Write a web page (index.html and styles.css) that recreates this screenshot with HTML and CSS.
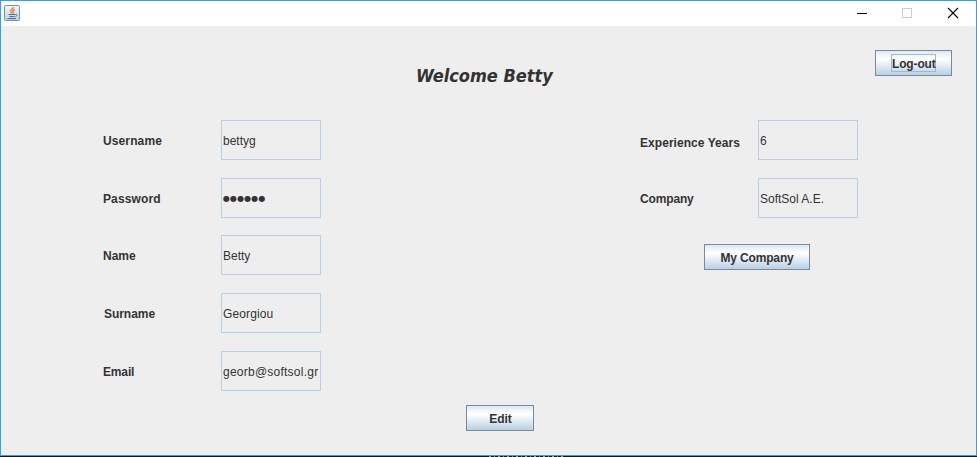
FILE: index.html
```
<!DOCTYPE html>
<html lang="en">
<head>
<meta charset="utf-8">
<title>Profile</title>
<link rel="stylesheet" href="styles.css">
</head>
<body>
<div class="window">
  <header class="titlebar">
    <svg class="app-icon" width="16" height="16" viewBox="0 0 16 16">
      <defs><linearGradient id="g" x1="0" y1="0" x2="0" y2="1"><stop offset="0" stop-color="#f4f7f9"/><stop offset="1" stop-color="#c3d0db"/></linearGradient></defs>
      <rect x=".5" y=".5" width="15" height="15" rx="1" fill="url(#g)" stroke="#7790a4"/>
      <path d="M9.300 2c.7 1.800-3.300 2.400-2.600 4.400.3.800 1 1.200 1.300 1.800M11 4.300c-1.500.7-2.700 1.300-1.900 2.300.5.600.2 1.100-.3 1.600" fill="none" stroke="#ea7a21" stroke-width="1.300"/>
      <path d="M4.500 9.500h6.500M5.500 11.500h5M3.500 13.500h8.500M11.200 9.500c2.500-.6 2.200 1.500.3 2" fill="none" stroke="#416e9c"/>
    </svg>
    <svg class="controls" width="102" height="12" viewBox="0 0 102 12" shape-rendering="crispEdges">
      <path d="M0 6.500h10" stroke="#000"/>
      <rect x="45.500" y="1.500" width="9" height="9" fill="none" stroke="#ccc"/>
      <path d="M91 1l10 10M101 1l-10 10" stroke="#000" stroke-width="1.100" shape-rendering="auto"/>
    </svg>
  </header>
  <main class="content">
    <div class="top">
      <h1>Welcome Betty</h1>
      <button class="btn logout"><span>Log-out</span></button>
    </div>
    <div class="columns">
      <section class="fields">
        <div class="row"><label class="wide">Username</label><div class="field">bettyg</div></div>
        <div class="row tight"><label class="wide">Password</label><div class="field dots">●●●●●●</div></div>
        <div class="row"><label>Name</label><div class="field">Betty</div></div>
        <div class="row"><label class="nudge">Surname</label><div class="field georg">Georgiou</div></div>
        <div class="row"><label class="narrow">Email</label><div class="field email">georb@softsol.gr</div></div>
      </section>
      <section class="fields">
        <div class="row"><label class="exp">Experience Years</label><div class="field">6</div></div>
        <div class="row"><label class="narrow">Company</label><div class="field">SoftSol A.E.</div></div>
        <button class="btn company">My Company</button>
      </section>
    </div>
    <button class="btn edit">Edit</button>
  </main>
</div>
<div class="backdrop"><div class="speckle"></div></div>
</body>
</html>
```
FILE: styles.css
```
* { box-sizing: border-box; }
body {
  margin: 0;
  height: 457px;
  overflow: hidden;
  font: 12px/14px "Liberation Sans", Arial, sans-serif;
  color: #333;
}
.window {
  height: 456px;
  border: 1px solid #35a0e8;
  background: #eee;
}
.backdrop { height: 1px; padding-left: 489px; background: #02192f; }
.speckle {
  width: 77px;
  height: 1px;
  background: repeating-linear-gradient(90deg, #a89c94 0 2px, #02192f 2px 5px, #6f86a4 5px 6px, #02192f 6px 9px);
}
.titlebar {
  height: 25px;
  display: flex;
  justify-content: space-between;
  padding: 4px 17px 0 3px;
  background: #fff;
}
.controls { margin-top: 2px; }
.content { display: flex; flex-direction: column; }
.top {
  display: flex;
  justify-content: space-between;
  align-items: flex-start;
  padding: 24px 24px 0 415px;
  height: 94px;
}
h1 {
  margin: 14px 0 0;
  font: italic bold 18px/24px "DejaVu Sans Condensed", "DejaVu Sans", sans-serif;
  font-stretch: condensed;
  white-space: nowrap;
}
.btn {
  height: 26px;
  padding: 2px 0 0;
  border: 1px solid #7a8a99;
  background: linear-gradient(#dde8f3 0, #fff 32%, #fff 35%, #b8cfe5 100%);
  font: bold 12px/14px "Liberation Sans", Arial, sans-serif;
  color: #333;
  white-space: nowrap;
}
.logout { width: 77px; display: flex; justify-content: center; align-items: flex-start; padding-top: 3px; }
.logout span { width: 45px; height: 18px; padding-top: 2px; border: 1px solid #a3b8cc; letter-spacing: -.15px; }
.columns { display: grid; grid-template-columns: 218px 1fr; column-gap: 319px; padding-left: 102px; }
.row { display: grid; grid-template-columns: 118px 100px; align-items: center; height: 40px; margin-bottom: 18px; }
.tight { margin-bottom: 17px; }
label { font-weight: bold; padding-top: 2px; white-space: nowrap; }
.wide { letter-spacing: .12px; }
.narrow { letter-spacing: -.15px; }
.nudge { padding-left: 1px; letter-spacing: -.05px; }
.exp { padding-top: 6px; letter-spacing: .05px; }
.field { height: 40px; padding: 13px 0 0 1px; border: 1px solid #b8cfe5; white-space: nowrap; }
.dots { font-family: "DejaVu Sans", sans-serif; font-size: 8px; letter-spacing: .1px; }
.georg { letter-spacing: .12px; }
.email { letter-spacing: .24px; }
.company { width: 106px; margin: 8px 0 0 64px; letter-spacing: -.15px; }
.edit { width: 68px; margin: -4px 0 0 465px; padding-left: 1px; letter-spacing: -.1px; }
```
